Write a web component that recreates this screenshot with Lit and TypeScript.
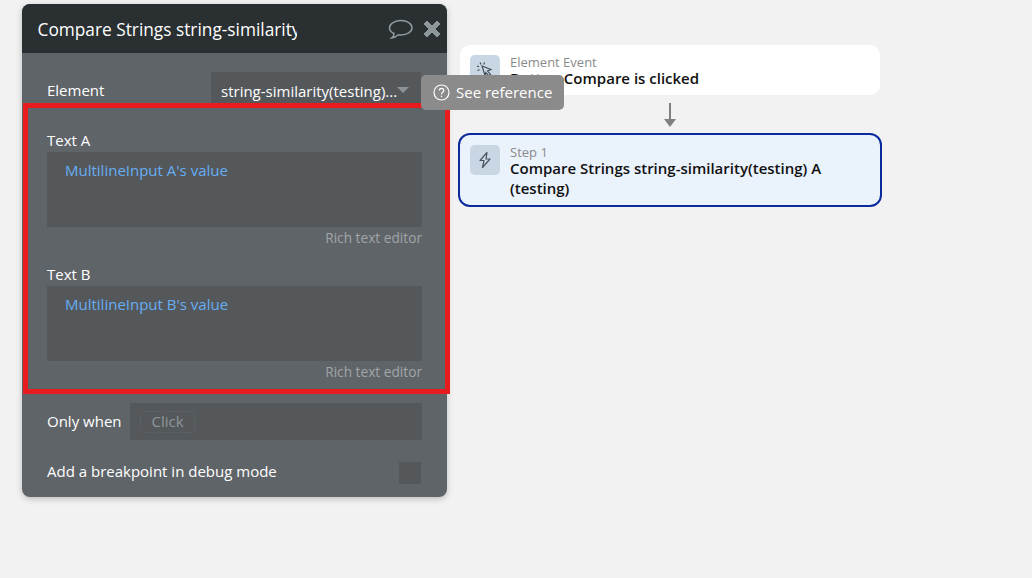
import { LitElement, html, css, svg } from "lit";
import { customElement } from "lit/decorators.js";

const bubble = svg`<path d="M13 2.500c6 0 11 3 11 7.200s-5 7.200-11 7.200c-1 0-1.800-.1-2.600-.2C9 18 7 19.600 3.600 20c1.400-1.200 2.400-2.800 2.500-4.500C3 14.200 1.500 12 1.500 9.700 1.500 5.500 7 2.500 13 2.500z" fill="none" stroke="#8f999b" stroke-width="1.500"/>`;
const cross = svg`<path d="M3 6l3-3 5 5 5-5 3 3-5 5 5 5-3 3-5-5-5 5-3-3 5-5z" fill="#8d9698" stroke="#8d9698" stroke-linejoin="round" stroke-width="1"/>`;

@customElement("app-root")
export class AppRoot extends LitElement {
  static styles = css`
    :host { display: block; width: 1032px; height: 578px; background: #f2f2f2; position: relative; overflow: hidden; font-family: "Open Sans", sans-serif; }
    .page { display: flex; align-items: flex-start; padding: 4px 0 0 22px; }
    .panel { width: 425px; height: 493px; background: #5f6468; border-radius: 8px; box-shadow: 0 2px 6px rgba(0,0,0,.22); overflow: hidden; color: #fff; font-size: 15px; flex: none; }
    .head { height: 49px; background: #2a3032; display: flex; align-items: center; padding: 0 4px 0 15.500px; gap: 7px; }
    .title { width: 259.500px; overflow: hidden; white-space: nowrap; font-size: 17.300px; line-height: 49px; padding-top: 1px; height: 48px; margin-right: auto; }
    .row { display: flex; align-items: center; justify-content: space-between; padding: 0 25px; }
    .el { margin-top: 19px; height: 36px; padding-right: 26px; }
    .dd { width: 210px; height: 36px; box-sizing: border-box; background: #54585b; display: flex; align-items: center; padding: 2px 0 0 10px; white-space: nowrap; }
    .dd span { width: 176px; overflow: hidden; }
    .tri { width: 0; height: 0; border: 6px solid transparent; border-top: 6px solid #8c9295; border-bottom: 0; margin-top: -2px; }
    .field { padding: 0 25px; }
    .fa { margin-top: 22px; }
    .fb { margin-top: 15px; }
    .lab { height: 22px; line-height: 20px; }
    .area { height: 75px; background: #54585b; box-sizing: border-box; padding: 8px 18px; color: #67adf2; line-height: 20px; }
    .rich { text-align: right; color: #a1a5a8; font-size: 13.700px; line-height: 22px; }
    .only { margin-top: 20px; height: 37px; }
    .t { margin-bottom: 2px; }
    .in { width: 292px; height: 37px; background: #54585b; box-sizing: border-box; display: flex; align-items: center; padding-left: 10px; }
    .click { box-sizing: border-box; width: 55px; height: 22px; border: 1px dashed #5e6367; border-radius: 3px; text-align: center; line-height: 19px; color: #8f9598; font-size: 15px; }
    .bp { margin-top: 20px; height: 24px; }
    .cb { width: 22px; height: 22px; background: #54585b; margin: 2px 1px 0 0; }
    .flow { margin: 41px 0 0 11px; width: 424px; display: flex; flex-direction: column; align-items: center; color: #111; }
    .card { box-sizing: border-box; display: flex; gap: 10px; background: #fff; border-radius: 10px; }
    .ev { width: 420px; height: 50px; padding: 10px; }
    .st { width: 424px; height: 74px; padding: 10px 10px; background: #eaf2fc; border: 2px solid #0c2a9c; border-radius: 12px; }
    .ic { width: 30px; height: 30px; background: #c9d6e3; border-radius: 5px; flex: none; display: flex; align-items: center; justify-content: center; }
    .tx { margin-top: -1px; }
    .sm { font-size: 13px; line-height: 16px; color: #8a8a8a; }
    .big { font-size: 15px; font-weight: 600; line-height: 20px; margin-top: -2px; }
    .arrow { height: 38px; box-sizing: border-box; padding-top: 2px; display: flex; align-items: center; justify-content: center; }
    .red { position: absolute; left: 23px; top: 103px; width: 427px; height: 291px; box-sizing: border-box; border: 5px solid #e81c1f; }
    .tip { position: absolute; left: 421px; top: 75px; width: 143px; height: 35px; background: #8b8b8b; border-radius: 5px; color: #fff; font-size: 15px; display: flex; align-items: center; padding: 0 0 2px 12px; gap: 6px; box-sizing: border-box; }
    .tip svg { margin-top: 2px; }
  `;

  render() {
    return html`
      <div class="page">
        <section class="panel">
          <div class="head">
            <div class="title">Compare Strings string-similarity(testing) A (testing)</div>
            <svg width="26" height="22" viewBox="0 0 26 22">${bubble}</svg>
            <svg width="22" height="22" viewBox="0 0 22 22">${cross}</svg>
          </div>
          <div class="row el">
            <div>Element</div>
            <div class="dd"><span>string-similarity(testing)...</span><i class="tri"></i></div>
          </div>
          <div class="field fa">
            <div class="lab">Text A</div>
            <div class="area">MultilineInput A's value</div>
            <div class="rich">Rich text editor</div>
          </div>
          <div class="field fb">
            <div class="lab">Text B</div>
            <div class="area">MultilineInput B's value</div>
            <div class="rich">Rich text editor</div>
          </div>
          <div class="row only">
            <div class="t">Only when</div>
            <div class="in"><div class="click">Click</div></div>
          </div>
          <div class="row bp">
            <div class="t">Add a breakpoint in debug mode</div>
            <div class="cb"></div>
          </div>
        </section>
        <div class="flow">
          <div class="card ev">
            <div class="ic">
              <svg width="20" height="20" viewBox="0 0 20 20" fill="none" stroke="#3c4650" stroke-width="1.100"><path d="M7 6l9 3.500-3.500 1.500 3 3.500-1.500 1.500-3.200-3.400L10 15.500z"/><path d="M5 2.500l1 2M2 6l2 .8M2.500 10.500l2-.8M9.500 2.500l-.8 2"/></svg>
            </div>
            <div class="tx">
              <div class="sm">Element Event</div>
              <div class="big">Button Compare is clicked</div>
            </div>
          </div>
          <div class="arrow">
            <svg width="14" height="24" viewBox="0 0 14 24"><path d="M7 0v17" stroke="#808080" stroke-width="2"/><path d="M1 16h12L7 24z" fill="#808080"/></svg>
          </div>
          <div class="card st">
            <div class="ic">
              <svg width="16" height="18" viewBox="0 0 16 18" fill="none" stroke="#4a5561" stroke-width="1.200" stroke-linejoin="round"><path d="M10 1.500L3 9.500h4l-1.500 7 7.500-8.500H9z"/></svg>
            </div>
            <div class="tx">
              <div class="sm">Step 1</div>
              <div class="big">Compare Strings string-similarity(testing) A (testing)</div>
            </div>
          </div>
        </div>
      </div>
      <div class="red"></div>
      <div class="tip">
        <svg width="17" height="17" viewBox="0 0 17 17" fill="none" stroke="#fff" stroke-width="1.200"><circle cx="8.500" cy="8.500" r="7.500"/><path d="M6.300 6.600c0-1.300 1-2.200 2.200-2.200s2.300.9 2.300 2.100c0 1.700-2.300 1.800-2.300 3.700"/><path d="M8.500 11.700v1.300"/></svg>
        <span>See reference</span>
      </div>
    `;
  }
}
